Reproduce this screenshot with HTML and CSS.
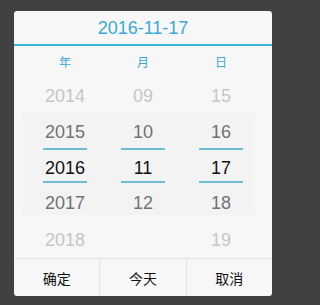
FILE: index.html
```html
<!DOCTYPE html>
<html>
<head>
<meta charset="utf-8">
<link rel="stylesheet" href="styles.css">
</head>
<body>
<div class="dialog">
  <div class="header">2016-11-17</div>
  <div class="labels">
    <div class="label">年</div>
    <div class="label">月</div>
    <div class="label">日</div>
  </div>
  <div class="wheel">
    <div class="col">
      <div class="cell r1 far">2014</div>
      <div class="cell r2 near"><span class="mark">2015</span></div>
      <div class="cell r3 sel"><span class="mark">2016</span></div>
      <div class="cell r4 near">2017</div>
      <div class="cell r5 far">2018</div>
    </div>
    <div class="col">
      <div class="cell r1 far">09</div>
      <div class="cell r2 near"><span class="mark">10</span></div>
      <div class="cell r3 sel"><span class="mark">11</span></div>
      <div class="cell r4 near">12</div>
      <div class="cell r5 far"></div>
    </div>
    <div class="col">
      <div class="cell r1 far">15</div>
      <div class="cell r2 near"><span class="mark">16</span></div>
      <div class="cell r3 sel"><span class="mark">17</span></div>
      <div class="cell r4 near">18</div>
      <div class="cell r5 far">19</div>
    </div>
  </div>
  <div class="footer">
    <div class="btn">确定</div>
    <div class="btn">今天</div>
    <div class="btn">取消</div>
  </div>
</div>
</body>
</html>
```

FILE: styles.css
```css
html, body {
  margin: 0;
  padding: 0;
  background: #414141;
}
body {
  width: 290px;
  height: 305px;
  overflow: hidden;
  font-family: "Liberation Sans", Arial, "Noto Sans CJK SC", sans-serif;
}
.dialog {
  margin: 11px 0 0 14px;
  width: 258px;
  height: 285px;
  background: #f7f7f7;
  border-radius: 3px;
  overflow: hidden;
}
.header {
  height: 33px;
  line-height: 34px;
  text-align: center;
  font-size: 18px;
  color: #3aa9d8;
  border-bottom: 2px solid #3ab4e1;
}
.labels {
  display: flex;
  padding: 0 12px;
  height: 32px;
}
.label {
  flex: 1;
  text-align: center;
  line-height: 32px;
  font-size: 12px;
  color: #3ba7da;
  font-family: "Noto Sans CJK SC", sans-serif;
}
.wheel {
  display: flex;
  padding: 0 12px;
  height: 180px;
  border-bottom: 1px solid #e2e2e2;
  background-color: #f7f7f7;
  background-image: linear-gradient(#f3f3f3, #f3f3f3);
  background-repeat: no-repeat;
  background-size: 232px 102px;
  background-position: 9px 35px;
}
.col {
  width: 78px;
  display: flex;
  flex-direction: column;
}
.cell {
  box-sizing: border-box;
  text-align: center;
  font-size: 18px;
  line-height: 20px;
}
.mark {
  display: block;
  width: 44px;
  margin: 0 auto;
  border-bottom: 2px solid #6dbdd5;
}
.r1 { padding-top: 8px; height: 36px; }
.r2 { padding-top: 8px; height: 36px; }
.r2 .mark { padding-bottom: 6px; }
.r3 { padding-top: 8px; height: 33px; }
.r3 .mark { padding-bottom: 3px; }
.r4 { padding-top: 10px; height: 39px; }
.r5 { padding-top: 8px; height: 36px; }
.far { color: #c6c6c6; }
.near { color: #727272; }
.sel { color: #111111; }
.footer {
  display: flex;
  height: 37px;
}
.btn {
  flex: 1;
  text-align: center;
  line-height: 39px;
  font-size: 14px;
  color: #111111;
  font-family: "Noto Sans CJK SC", sans-serif;
  border-left: 1px solid #e2e2e2;
}
.btn:first-child {
  border-left: none;
}
```
